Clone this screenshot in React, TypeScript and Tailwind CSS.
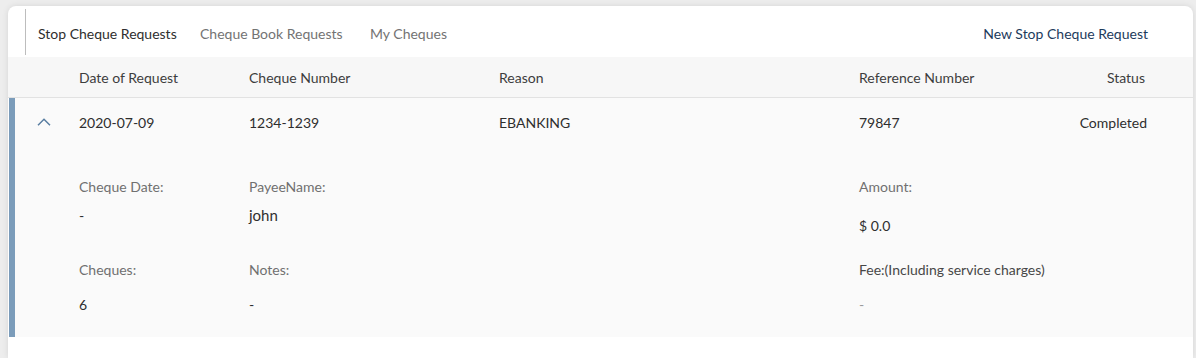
import React from "react";

const font = { fontFamily: "Lato, 'Open Sans', sans-serif" };

export default function App() {
  return (
    <div
      className="w-[1196px] h-[358px] overflow-hidden bg-[#ededed] pl-[8px] pt-[6px] pr-[3px] text-[14px]"
      style={font}
    >
      <div className="h-full bg-white rounded-t-[8px] shadow-[0_0_6px_rgba(0,0,0,0.10)] flex flex-col overflow-hidden">
        {/* Tabs */}
        <div className="h-[51px] flex items-stretch shrink-0">
          <div className="ml-[17px] mt-[3px] mb-[2px] w-px bg-[#bdbdbd]" />
          <div className="flex items-center pt-[3px] pl-[12px]">
            <span className="w-[162px] text-[#2e2e2e]">Stop Cheque Requests</span>
            <span className="w-[170px] text-[#737373]">Cheque Book Requests</span>
            <span className="text-[#737373]">My Cheques</span>
          </div>
          <div className="ml-auto mr-[45px] flex items-center pt-[3px] text-[#1d3b5c]">
            New Stop Cheque Request
          </div>
        </div>

        {/* Header */}
        <div className="h-[41px] shrink-0 bg-[#f7f7f7] border-b border-[#e2e2e2] flex items-center text-[#3d3d3d]">
          <div className="w-[71px]" />
          <div className="w-[170px]">Date of Request</div>
          <div className="w-[250px]">Cheque Number</div>
          <div className="w-[360px]">Reason</div>
          <div className="flex-1">Reference Number</div>
          <div className="mr-[48px]">Status</div>
        </div>

        {/* Expanded row */}
        <div className="h-[239px] shrink-0 ml-px bg-[#fafafa] border-l-[6px] border-[#7b9cba] flex flex-col text-[#2e2e2e]">
          <div className="h-[50px] flex items-center pb-[2px]">
            <div className="w-[64px] flex pl-[22px]">
              <svg width="14" height="8" viewBox="0 0 14 8" fill="none">
                <path d="M1 7.2L7 1.2L13 7.2" stroke="#5b7fa2" strokeWidth="1.5" />
              </svg>
            </div>
            <div className="w-[170px]">2020-07-09</div>
            <div className="w-[250px]">1234-1239</div>
            <div className="w-[360px]">EBANKING</div>
            <div className="flex-1">79847</div>
            <div className="mr-[46px]">Completed</div>
          </div>

          <div className="flex pt-[29px]">
            <div className="w-[64px]" />
            <div className="w-[170px] flex flex-col">
              <span className="h-[20px] leading-[20px] text-[#707070]">Cheque Date:</span>
              <span className="mt-[9px] h-[20px] leading-[20px]">-</span>
              <span className="mt-[34px] h-[20px] leading-[20px] text-[#707070]">Cheques:</span>
              <span className="mt-[15px] h-[20px] leading-[20px]">6</span>
            </div>
            <div className="w-[610px] flex flex-col">
              <span className="h-[20px] leading-[20px] text-[#707070]">PayeeName:</span>
              <span className="mt-[8px] h-[20px] leading-[20px] text-[15px]">john</span>
              <span className="mt-[35px] h-[20px] leading-[20px] text-[#707070]">Notes:</span>
              <span className="mt-[15px] h-[20px] leading-[20px]">-</span>
            </div>
            <div className="flex-1 flex flex-col">
              <span className="h-[20px] leading-[20px] text-[#707070]">Amount:</span>
              <span className="mt-[19px] h-[20px] leading-[20px]">$ 0.0</span>
              <span className="mt-[24px] h-[20px] leading-[20px] text-[#474747]">Fee:(Including service charges)</span>
              <span className="mt-[15px] h-[20px] leading-[20px] text-[#9a9a9a]">-</span>
            </div>
          </div>
        </div>
      </div>
    </div>
  );
}
